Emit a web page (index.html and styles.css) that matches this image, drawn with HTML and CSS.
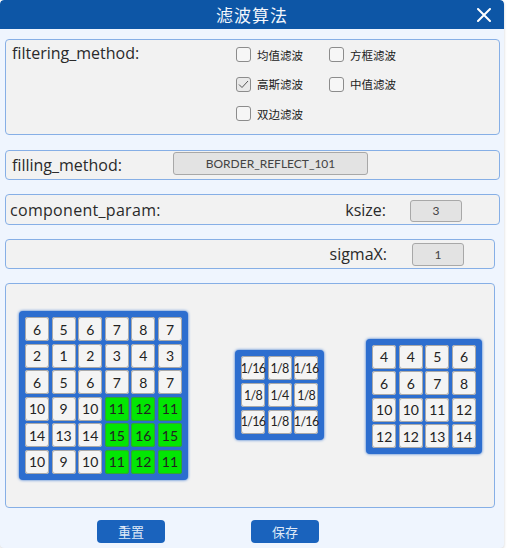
FILE: index.html
```html
<!DOCTYPE html>
<html lang="zh">
<head>
<meta charset="utf-8">
<title>滤波算法</title>
<link rel="stylesheet" href="styles.css">
</head>
<body>
<div class="window">
  <div class="titlebar">
    <span></span>
    <span class="title">滤波算法</span>
    <span class="close">
      <svg width="14" height="14" viewBox="0 0 14 14"><path d="M1 1 L13 13 M13 1 L1 13" stroke="#fff" stroke-width="2" stroke-linecap="round" fill="none"/></svg>
    </span>
  </div>
  <div class="content">
    <section class="panel p-filter">
      <div class="label">filtering_method:</div>
      <div class="checks">
        <label class="check"><span class="box"></span>均值滤波</label>
        <label class="check"><span class="box"></span>方框滤波</label>
        <label class="check"><span class="box checked"><svg width="11" height="9" viewBox="0 0 11 9"><path d="M1 4.5 L4 7.5 L10 1" stroke="#555" stroke-width="1" fill="none"/></svg></span>高斯滤波</label>
        <label class="check"><span class="box"></span>中值滤波</label>
        <label class="check"><span class="box"></span>双边滤波</label>
      </div>
    </section>

    <section class="panel row p-fill">
      <div class="label fill-label">filling_method:</div>
      <div class="select">BORDER_REFLECT_101</div>
    </section>

    <section class="panel row p-comp">
      <div class="label grow comp-label">component_param:</div>
      <div class="label">ksize:</div>
      <div class="spin">3</div>
    </section>

    <section class="panel narrow row p-sigma">
      <div class="label grow"></div>
      <div class="label">sigmaX:</div>
      <div class="spin">1</div>
    </section>

    <section class="panel narrow p-grids">
      <div class="matrix m6">
        <span class="cell">6</span><span class="cell">5</span><span class="cell">6</span><span class="cell">7</span><span class="cell">8</span><span class="cell">7</span>
        <span class="cell">2</span><span class="cell">1</span><span class="cell">2</span><span class="cell">3</span><span class="cell">4</span><span class="cell">3</span>
        <span class="cell">6</span><span class="cell">5</span><span class="cell">6</span><span class="cell">7</span><span class="cell">8</span><span class="cell">7</span>
        <span class="cell">10</span><span class="cell">9</span><span class="cell">10</span><span class="cell hi">11</span><span class="cell hi">12</span><span class="cell hi">11</span>
        <span class="cell">14</span><span class="cell">13</span><span class="cell">14</span><span class="cell hi">15</span><span class="cell hi">16</span><span class="cell hi">15</span>
        <span class="cell">10</span><span class="cell">9</span><span class="cell">10</span><span class="cell hi">11</span><span class="cell hi">12</span><span class="cell hi">11</span>
      </div>
      <div class="matrix m3">
        <span class="cell">1/16</span><span class="cell">1/8</span><span class="cell">1/16</span>
        <span class="cell">1/8</span><span class="cell">1/4</span><span class="cell">1/8</span>
        <span class="cell">1/16</span><span class="cell">1/8</span><span class="cell">1/16</span>
      </div>
      <div class="matrix m4">
        <span class="cell">4</span><span class="cell">4</span><span class="cell">5</span><span class="cell">6</span>
        <span class="cell">6</span><span class="cell">6</span><span class="cell">7</span><span class="cell">8</span>
        <span class="cell">10</span><span class="cell">10</span><span class="cell">11</span><span class="cell">12</span>
        <span class="cell">12</span><span class="cell">12</span><span class="cell">13</span><span class="cell">14</span>
      </div>
    </section>

    <div class="buttons">
      <button class="btn">重置</button>
      <button class="btn">保存</button>
    </div>
  </div>
</div>
</body>
</html>
```

FILE: styles.css
```css
* { box-sizing: border-box; }

html, body {
  margin: 0;
  padding: 0;
  background: #ffffff;
}

body {
  font-family: "Open Sans", "Noto Sans CJK SC", sans-serif;
  color: #222;
}

.window {
  width: 504px;
  height: 548px;
  background: #eff5fe;
  border-radius: 4px;
  box-shadow: 0 1px 3px rgba(0, 0, 0, 0.18);
  overflow: hidden;
}

.titlebar {
  height: 29px;
  background: #0d56a6;
  display: grid;
  grid-template-columns: 1fr auto 1fr;
  align-items: center;
  border-radius: 4px 4px 0 0;
}

.title {
  color: #f4f7fc;
  font-family: "Noto Sans CJK SC", sans-serif;
  font-size: 17px;
  letter-spacing: 1px;
  line-height: 29px;
}

.close {
  justify-self: end;
  margin-right: 13px;
  display: flex;
  align-items: center;
}

.content {
  padding: 10px 0 0 5px;
  display: flex;
  flex-direction: column;
}

.panel {
  width: 495px;
  background: #f2f2f2;
  border: 1px solid #86afe6;
  border-radius: 4px;
}

.panel.narrow { width: 490px; }

.row {
  display: flex;
  align-items: center;
}

.label {
  font-size: 16px;
  color: #2a2a2a;
  white-space: nowrap;
}

.grow { flex: 1; }

/* filtering panel */
.p-filter {
  height: 96px;
  display: flex;
  align-items: flex-start;
}

.p-filter > .label {
  width: 230px;
  padding: 2px 0 0 6px;
}

.checks {
  display: grid;
  grid-template-columns: 93px auto;
  grid-auto-rows: 29.5px;
}

.check {
  display: flex;
  align-items: center;
  font-family: "Noto Sans CJK SC", sans-serif;
  font-size: 11.5px;
  color: #222;
  gap: 6px;
}

.box {
  width: 15px;
  height: 15px;
  border: 1px solid #8c8c8c;
  border-radius: 3px;
  background: #f6f6f6;
  display: flex;
  align-items: center;
  justify-content: center;
}

.box.checked { background: #e9e9e9; }

/* filling panel */
.p-fill {
  margin-top: 15px;
  height: 30px;
}

.fill-label {
  width: 167px;
  padding-left: 6px;
}

.select {
  width: 195px;
  height: 23px;
  margin-top: -3px;
  background: #e3e3e3;
  border: 1px solid #a8a8a8;
  border-radius: 3px;
  font-family: "Lato", sans-serif;
  font-size: 12px;
  color: #444;
  display: flex;
  align-items: center;
  justify-content: center;
}

/* component panel */
.p-comp {
  margin-top: 14px;
  height: 31px;
  padding: 0 37px 0 4px;
}

.comp-label { letter-spacing: 0.3px; }

.spin {
  width: 52px;
  height: 22px;
  margin-left: 24px;
  margin-top: 2px;
  background: #e3e3e3;
  border: 1px solid #a8a8a8;
  border-radius: 3px;
  font-family: "Lato", sans-serif;
  font-size: 12px;
  color: #444;
  display: flex;
  align-items: center;
  justify-content: center;
}

.p-sigma {
  margin-top: 14px;
  height: 30px;
  padding: 0 30px 0 4px;
}

.p-sigma .spin { height: 23px; margin-left: 25px; margin-top: 0; }

/* grids panel */
.p-grids {
  margin-top: 14px;
  height: 225px;
  display: flex;
  align-items: center;
  padding-left: 13px;
}

.matrix {
  display: grid;
  gap: 2.6px;
  padding: 6px;
  background: #2d6ecf;
  border-radius: 4px;
  box-shadow: 0 0 3px #2d6ecf;
}

.m6 { grid-template-columns: repeat(6, 24px); }
.m3 { grid-template-columns: repeat(3, 24px); margin-left: 47px; margin-top: -1px; }
.m4 { grid-template-columns: repeat(4, 24px); margin-left: 42px; margin-top: 2px; }

.cell {
  width: 24px;
  height: 24px;
  background: #f4f4f4;
  box-shadow: inset 0 0 0 1px #a9a9a9;
  border-radius: 3px;
  display: flex;
  align-items: center;
  justify-content: center;
  font-family: "Lato", sans-serif;
  font-size: 14px;
  color: #222;
  white-space: nowrap;
}

.m3 .cell { font-size: 12.5px; letter-spacing: -0.7px; }

.cell.hi {
  background: #03e603;
  box-shadow: inset 0 0 0 1px #31a531;
}

/* buttons */
.buttons {
  display: flex;
  margin-top: 12px;
  padding-left: 92px;
  gap: 86px;
}

.btn {
  width: 68px;
  height: 23px;
  border: none;
  border-radius: 4px;
  background: #1a63bd;
  color: #dfe9f7;
  font-family: "Noto Sans CJK SC", sans-serif;
  font-size: 13px;
  padding: 0;
}
```
